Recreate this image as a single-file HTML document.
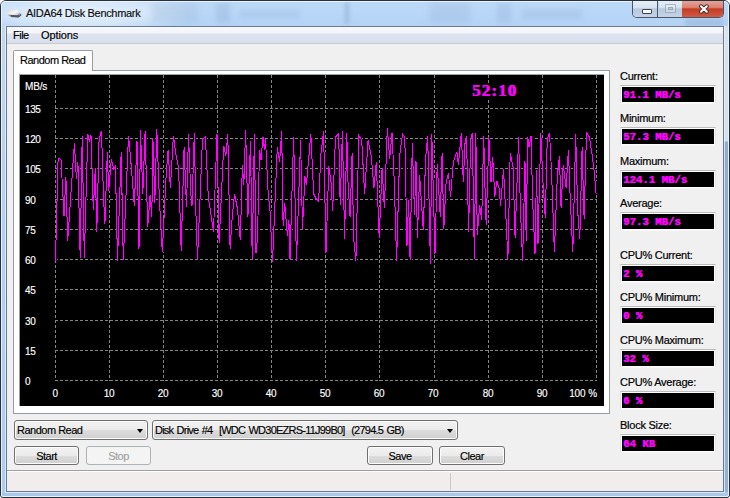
<!DOCTYPE html>
<html><head><meta charset="utf-8">
<style>
*{margin:0;padding:0;box-sizing:border-box}
html,body{width:730px;height:498px;overflow:hidden;background:#fff}
body{position:relative;font-family:"Liberation Sans",sans-serif;font-size:11px;color:#000;letter-spacing:-0.5px;-webkit-text-stroke:0.15px #000}
.a{position:absolute}
.lbl{color:#fff;font-size:11px;letter-spacing:-0.3px}
.rl{left:620px;font-size:11px;color:#000;letter-spacing:-0.25px;-webkit-text-stroke:0.2px #000}
.box{left:620px;width:96px;height:19px;background:#000;border-style:solid;border-width:1px;border-color:#bcbcbc #e6e6e6 #f7f7f7 #e2e2e2;box-shadow:inset 0 0 0 1px #fff;color:#ff00ff;font-family:"Liberation Mono",monospace;font-weight:bold;font-size:10.7px;letter-spacing:0;padding-left:2px;padding-top:1px;line-height:17px;text-shadow:0.45px 0 0 #f0f;-webkit-text-stroke:0.1px #f0f}
.btn{height:19px;border:1px solid #707070;border-radius:3px;background:linear-gradient(to bottom,#f2f2f2 0,#ebebeb 50%,#dddddd 51%,#cfcfcf 100%);text-align:center;line-height:16px;padding-top:1px;box-shadow:inset 0 0 0 1px #fcfcfc}
.btn.dis{border-color:#adb2b5;background:#f4f4f4;color:#a0a0a0;box-shadow:none;-webkit-text-stroke:0.15px #a0a0a0}
.combo{height:20px;border:1px solid #707070;border-radius:3px;background:linear-gradient(to bottom,#f2f2f2 0,#ebebeb 50%,#dddddd 51%,#cfcfcf 100%);line-height:19px;padding-left:2px;box-shadow:inset 0 0 0 1px #fcfcfc}
.arr{width:0;height:0;border-left:3.5px solid transparent;border-right:3.5px solid transparent;border-top:4px solid #000}
.clb{color:#fff;font-size:10px;letter-spacing:-0.4px;line-height:11px;-webkit-text-stroke:0.15px #fff}
</style></head><body>
<!-- window frame -->
<div class="a" style="left:0;top:0;width:730px;height:498px;border:1px solid #28303c;border-radius:6px 6px 3px 3px;background:#b6d4f2"></div>
<div class="a" style="left:1px;top:1px;width:728px;height:25px;border-radius:5px 5px 0 0;background:linear-gradient(to bottom,#bcd9f7 0,#b4d3f5 100%)"></div>
<div class="a" style="left:2px;top:26px;width:4px;height:466px;background:linear-gradient(to bottom,#c4d8ec 0,#bcd4ee 80px,#b0d0f4 200px,#acccf0 100%)"></div>
<div class="a" style="left:724px;top:26px;width:4px;height:466px;background:linear-gradient(to bottom,#d6e2ee 0,#d4e0ec 115px,#8eaed0 116px,#92b2d4 100%)"></div>
<div class="a" style="left:2px;top:492px;width:726px;height:4px;background:#a8c8ea"></div>
<div class="a" style="left:1px;top:1px;width:728px;height:496px;border:1px solid rgba(255,255,255,.7);border-radius:5px 5px 2px 2px"></div>
<div class="a" style="left:5px;top:25px;width:720px;height:468px;border:1px solid rgba(235,245,255,.75);border-top-color:transparent"></div>
<!-- title glow -->
<div class="a" style="left:1px;top:1px;width:200px;height:25px;background:radial-gradient(ellipse 120px 22px at 80px 12px,rgba(240,246,252,.85) 0,rgba(240,246,252,.5) 55%,rgba(240,246,252,0) 100%)"></div>
<div class="a" style="left:152px;top:4px;width:45px;height:18px;background:rgba(110,140,180,.16);filter:blur(3px)"></div>
<div class="a" style="left:216px;top:3px;width:14px;height:20px;background:rgba(110,140,180,.18);filter:blur(2px)"></div>
<div class="a" style="left:240px;top:10px;width:60px;height:8px;background:rgba(110,140,180,.12);filter:blur(2px)"></div>
<div class="a" style="left:344px;top:2px;width:6px;height:22px;background:rgba(100,130,170,.2);filter:blur(1.5px)"></div>
<div class="a" style="left:430px;top:3px;width:40px;height:20px;background:rgba(110,140,180,.14);filter:blur(3px)"></div>
<div class="a" style="left:497px;top:3px;width:14px;height:20px;background:rgba(110,140,180,.16);filter:blur(2px)"></div>
<div class="a" style="left:522px;top:9px;width:60px;height:10px;background:rgba(110,140,180,.14);filter:blur(2px)"></div>
<div class="a" style="left:685px;top:19px;width:38px;height:7px;background:rgba(90,120,160,.22);filter:blur(2px)"></div>
<!-- icon -->
<svg class="a" style="left:6px;top:8px" width="17" height="11" viewBox="0 0 17 11">
 <defs><linearGradient id="hd" x1="0" y1="0" x2="1" y2="1"><stop offset="0" stop-color="#d8d8d8"/><stop offset=".45" stop-color="#f6f6f6"/><stop offset="1" stop-color="#9a9aa0"/></linearGradient>
 <filter id="bl"><feGaussianBlur stdDeviation=".45"/></filter></defs>
 <g filter="url(#bl)">
 <path d="M1.2,4.2 L3.5,1.8 L11.5,2 L15.2,5.5 L15.2,7.5 L12.5,9.6 L5,9 L1.5,6.5 Z" fill="url(#hd)"/>
 <path d="M5,9 L12.5,9.6 L15.2,7.5 L15.2,5.8 L11,7.2 L4,6.8 Z" fill="#55555e"/>
 <path d="M1.5,6.5 L4,6.8 L5,9 Z" fill="#8a8a90"/>
 <circle cx="13.3" cy="6.5" r="1" fill="#9a90d8"/>
 </g>
</svg>
<!-- title -->
<div class="a" style="left:26px;top:7px;font-size:11px;letter-spacing:-0.32px;color:#101010">AIDA64 Disk Benchmark</div>
<!-- caption buttons -->
<div class="a" style="left:632px;top:1px;width:92px;height:17px;border:1px solid #4a5666;border-top:none;border-radius:0 0 5px 5px;overflow:hidden">
  <div class="a" style="left:0;top:0;width:25px;height:16px;background:linear-gradient(to bottom,#e6eef7 0,#d8e3ef 40%,#b8c9de 50%,#c4d3e6 100%);border-right:1px solid #4a5666"></div>
  <div class="a" style="left:26px;top:0;width:24px;height:16px;background:linear-gradient(to bottom,#e6eef7 0,#d8e3ef 40%,#b8c9de 50%,#c4d3e6 100%);border-right:1px solid #4a5666"></div>
  <div class="a" style="left:49px;top:0;width:43px;height:16px;background:linear-gradient(to bottom,#e3a497 0,#d98274 40%,#c63b25 50%,#cf5a43 100%)"></div>
  <div class="a" style="left:9px;top:8px;width:10px;height:5px;background:#fff;border:1px solid #3a4454;border-radius:1px"></div>
  <div class="a" style="left:32px;top:3px;width:11px;height:9px;border:1px solid rgba(120,135,155,.55);border-radius:1px;background:rgba(255,255,255,.25)"><div class="a" style="left:2px;top:2px;width:5px;height:3px;border:1px solid rgba(120,135,155,.55);background:rgba(170,185,205,.4)"></div></div>
  <svg class="a" style="left:65px;top:3px" width="12" height="10" viewBox="0 0 12 10"><path d="M3,2.3 L8.8,7.7 M8.8,2.3 L3,7.7" stroke="#40302e" stroke-width="4" stroke-linecap="round"/><path d="M3,2.3 L8.8,7.7 M8.8,2.3 L3,7.7" stroke="#fff" stroke-width="2" stroke-linecap="round"/></svg>
</div>
<!-- client -->
<div class="a" style="left:6px;top:26px;width:718px;height:466px;border:1px solid #6a7a8c;background:#f0f0f0"></div>
<!-- menu -->
<div class="a" style="left:7px;top:27px;width:716px;height:17px;background:linear-gradient(to bottom,#f8f9fc 0,#f2f4f9 6px,#dfe3f0 7px,#dbe0ee 15px);border-bottom:1px solid #c5c9d5"></div>
<div class="a" style="left:13px;top:29px">File</div>
<div class="a" style="left:41px;top:29px;letter-spacing:-0.1px">Options</div>
<!-- tab page -->
<div class="a" style="left:13px;top:70px;width:597px;height:344px;background:#fff;border:1px solid #979ba3"></div>
<div class="a" style="left:13px;top:50px;width:80px;height:21px;background:#fff;border:1px solid #979ba3;border-bottom:none;border-radius:2px 2px 0 0"></div>
<div class="a" style="left:20px;top:54px">Random Read</div>
<!-- chart -->
<div class="a" style="left:19px;top:74px;width:585px;height:332px;background:#000;border-top:1px solid #a0a0a0;border-left:1px solid #a0a0a0"></div>
<svg class="a" style="left:20px;top:75px" width="584" height="331" viewBox="20 75 584 331" shape-rendering="crispEdges">
<line x1="55" y1="380.5" x2="597" y2="380.5" stroke="#858585" stroke-width="1" stroke-dasharray="3 2"/>
<line x1="55" y1="350.5" x2="597" y2="350.5" stroke="#858585" stroke-width="1" stroke-dasharray="3 2"/>
<line x1="55" y1="320.5" x2="597" y2="320.5" stroke="#858585" stroke-width="1" stroke-dasharray="3 2"/>
<line x1="55" y1="289.5" x2="597" y2="289.5" stroke="#858585" stroke-width="1" stroke-dasharray="3 2"/>
<line x1="55" y1="259.5" x2="597" y2="259.5" stroke="#858585" stroke-width="1" stroke-dasharray="3 2"/>
<line x1="55" y1="229.5" x2="597" y2="229.5" stroke="#858585" stroke-width="1" stroke-dasharray="3 2"/>
<line x1="55" y1="199.5" x2="597" y2="199.5" stroke="#858585" stroke-width="1" stroke-dasharray="3 2"/>
<line x1="55" y1="168.5" x2="597" y2="168.5" stroke="#858585" stroke-width="1" stroke-dasharray="3 2"/>
<line x1="55" y1="138.5" x2="597" y2="138.5" stroke="#858585" stroke-width="1" stroke-dasharray="3 2"/>
<line x1="55" y1="108.5" x2="597" y2="108.5" stroke="#858585" stroke-width="1" stroke-dasharray="3 2"/>
<line x1="55.5" y1="75" x2="55.5" y2="381" stroke="#858585" stroke-width="1" stroke-dasharray="3 2"/>
<line x1="109.5" y1="75" x2="109.5" y2="381" stroke="#858585" stroke-width="1" stroke-dasharray="3 2"/>
<line x1="163.5" y1="75" x2="163.5" y2="381" stroke="#858585" stroke-width="1" stroke-dasharray="3 2"/>
<line x1="217.5" y1="75" x2="217.5" y2="381" stroke="#858585" stroke-width="1" stroke-dasharray="3 2"/>
<line x1="271.5" y1="75" x2="271.5" y2="381" stroke="#858585" stroke-width="1" stroke-dasharray="3 2"/>
<line x1="325.5" y1="75" x2="325.5" y2="381" stroke="#858585" stroke-width="1" stroke-dasharray="3 2"/>
<line x1="379.5" y1="75" x2="379.5" y2="381" stroke="#858585" stroke-width="1" stroke-dasharray="3 2"/>
<line x1="434.5" y1="75" x2="434.5" y2="381" stroke="#858585" stroke-width="1" stroke-dasharray="3 2"/>
<line x1="488.5" y1="75" x2="488.5" y2="381" stroke="#858585" stroke-width="1" stroke-dasharray="3 2"/>
<line x1="542.5" y1="75" x2="542.5" y2="381" stroke="#858585" stroke-width="1" stroke-dasharray="3 2"/>
<line x1="596.5" y1="75" x2="596.5" y2="381" stroke="#858585" stroke-width="1" stroke-dasharray="3 2"/>
</svg>
<svg class="a" style="left:20px;top:75px" width="584" height="331" viewBox="20 75 584 331">
<path d="M55.5,260.8 L58.1,158.4 L61.0,159.5 L64.0,216.0 L65.9,177.3 L67.7,241.0 L74.4,142.9 L76.4,179.3 L77.9,161.8 L80.2,257.6 L82.2,136.2 L84.3,257.9 L87.8,133.6 L89.2,141.5 L91.0,135.1 L93.3,209.9 L95.3,167.7 L96.8,231.7 L99.1,138.6 L101.5,130.7 L103.5,196.8 L104.9,224.4 L107.3,151.7 L108.7,191.0 L111.4,158.9 L113.7,169.1 L115.4,166.2 L117.5,260.8 L121.2,151.7 L123.3,260.2 L128.5,135.6 L131.4,167.7 L134.3,205.5 L137.0,141.5 L139.0,249.2 L140.5,130.4 L142.8,193.9 L145.1,131.3 L147.7,227.3 L150.1,195.3 L151.8,217.0 L152.9,138.0 L154.8,203.0 L156.8,129.2 L159.4,199.7 L162.3,252.1 L166.1,176.4 L168.1,150.2 L170.4,188.0 L173.4,135.6 L175.7,153.1 L178.6,167.7 L181.2,250.6 L184.1,147.3 L186.5,207.0 L188.5,134.2 L190.8,193.9 L192.0,205.5 L194.3,132.7 L196.1,220.1 L197.5,259.4 L202.5,138.6 L205.4,137.1 L208.3,196.8 L213.5,231.7 L217.0,134.2 L219.1,243.4 L221.4,195.3 L223.7,145.8 L225.8,156.0 L227.8,134.2 L230.1,249.2 L232.2,217.2 L234.5,193.9 L237.4,208.4 L240.3,240.4 L242.4,164.8 L243.8,185.1 L245.6,129.8 L247.9,217.2 L250.5,141.0 L252.2,259.0 L254.4,134.0 L256.0,253.0 L257.5,238.0 L259.5,150.0 L261.0,160.0 L263.0,137.0 L264.5,150.0 L265.5,139.0 L268.0,190.0 L270.0,211.0 L272.5,262.0 L277.3,147.3 L279.6,161.8 L281.7,131.3 L283.1,225.9 L284.6,202.6 L287.5,236.1 L288.9,220.1 L290.0,259.0 L293.6,137.0 L296.5,261.0 L300.6,140.0 L302.5,229.0 L304.9,176.4 L306.4,185.1 L310.8,134.2 L313.7,193.9 L315.7,198.0 L318.6,201.1 L321.0,153.1 L323.6,131.3 L326.0,253.0 L328.8,166.2 L331.1,182.2 L332.6,211.0 L335.5,137.1 L338.7,134.0 L340.2,205.0 L342.4,131.0 L344.6,239.0 L346.8,133.0 L348.0,182.0 L350.1,217.2 L352.1,153.1 L353.6,237.5 L355.9,260.8 L358.8,135.6 L361.7,140.0 L364.6,193.9 L368.1,140.0 L371.3,156.0 L373.9,188.0 L376.3,161.8 L379.2,237.5 L382.1,167.7 L384.4,208.4 L387.3,128.4 L389.7,158.9 L392.0,132.7 L394.3,182.2 L396.6,260.8 L399.6,156.0 L402.5,134.2 L404.8,137.1 L407.0,246.0 L408.6,200.0 L410.1,260.0 L412.3,143.0 L414.5,215.0 L416.0,161.0 L417.4,238.0 L419.6,175.0 L423.3,230.0 L425.5,160.0 L427.7,136.0 L430.4,264.0 L431.8,134.0 L435.0,254.0 L437.2,164.0 L440.3,217.0 L442.1,153.1 L443.8,228.8 L446.1,182.2 L448.5,173.5 L450.5,196.8 L453.4,161.8 L456.9,151.7 L458.4,164.8 L461.3,132.7 L463.3,182.2 L465.1,141.5 L466.5,135.6 L468.6,231.7 L470.6,141.5 L472.3,132.7 L474.4,259.4 L475.8,132.7 L477.3,234.6 L479.6,205.5 L481.7,220.1 L483.7,135.6 L485.4,202.6 L486.2,225.0 L488.9,137.1 L491.0,182.2 L492.7,157.5 L494.8,196.8 L496.8,180.8 L499.1,188.0 L500.6,205.5 L503.5,169.1 L505.5,208.4 L507.9,259.4 L510.2,153.1 L513.1,167.7 L515.1,237.5 L518.6,137.1 L520.4,208.4 L522.6,261.0 L525.0,161.0 L526.2,241.0 L527.7,137.1 L529.1,147.3 L531.1,135.6 L532.6,199.7 L535.0,254.0 L536.5,170.0 L538.0,244.0 L540.8,132.7 L542.8,180.0 L545.3,218.0 L547.2,140.0 L549.5,132.7 L551.5,170.6 L554.4,252.1 L557.3,176.4 L559.4,156.0 L561.1,208.4 L563.2,164.8 L566.1,188.0 L568.4,150.2 L570.4,202.6 L572.8,252.1 L575.7,134.2 L577.7,211.3 L579.8,239.0 L582.1,147.3 L584.1,218.6 L586.5,132.7 L589.4,137.1 L592.3,156.0 L594.3,172.0 L596.1,193.9" fill="none" stroke="#220022" stroke-width="1" shape-rendering="crispEdges" transform="translate(1,0)"/>
<path d="M55.5,260.8 L58.1,158.4 L61.0,159.5 L64.0,216.0 L65.9,177.3 L67.7,241.0 L74.4,142.9 L76.4,179.3 L77.9,161.8 L80.2,257.6 L82.2,136.2 L84.3,257.9 L87.8,133.6 L89.2,141.5 L91.0,135.1 L93.3,209.9 L95.3,167.7 L96.8,231.7 L99.1,138.6 L101.5,130.7 L103.5,196.8 L104.9,224.4 L107.3,151.7 L108.7,191.0 L111.4,158.9 L113.7,169.1 L115.4,166.2 L117.5,260.8 L121.2,151.7 L123.3,260.2 L128.5,135.6 L131.4,167.7 L134.3,205.5 L137.0,141.5 L139.0,249.2 L140.5,130.4 L142.8,193.9 L145.1,131.3 L147.7,227.3 L150.1,195.3 L151.8,217.0 L152.9,138.0 L154.8,203.0 L156.8,129.2 L159.4,199.7 L162.3,252.1 L166.1,176.4 L168.1,150.2 L170.4,188.0 L173.4,135.6 L175.7,153.1 L178.6,167.7 L181.2,250.6 L184.1,147.3 L186.5,207.0 L188.5,134.2 L190.8,193.9 L192.0,205.5 L194.3,132.7 L196.1,220.1 L197.5,259.4 L202.5,138.6 L205.4,137.1 L208.3,196.8 L213.5,231.7 L217.0,134.2 L219.1,243.4 L221.4,195.3 L223.7,145.8 L225.8,156.0 L227.8,134.2 L230.1,249.2 L232.2,217.2 L234.5,193.9 L237.4,208.4 L240.3,240.4 L242.4,164.8 L243.8,185.1 L245.6,129.8 L247.9,217.2 L250.5,141.0 L252.2,259.0 L254.4,134.0 L256.0,253.0 L257.5,238.0 L259.5,150.0 L261.0,160.0 L263.0,137.0 L264.5,150.0 L265.5,139.0 L268.0,190.0 L270.0,211.0 L272.5,262.0 L277.3,147.3 L279.6,161.8 L281.7,131.3 L283.1,225.9 L284.6,202.6 L287.5,236.1 L288.9,220.1 L290.0,259.0 L293.6,137.0 L296.5,261.0 L300.6,140.0 L302.5,229.0 L304.9,176.4 L306.4,185.1 L310.8,134.2 L313.7,193.9 L315.7,198.0 L318.6,201.1 L321.0,153.1 L323.6,131.3 L326.0,253.0 L328.8,166.2 L331.1,182.2 L332.6,211.0 L335.5,137.1 L338.7,134.0 L340.2,205.0 L342.4,131.0 L344.6,239.0 L346.8,133.0 L348.0,182.0 L350.1,217.2 L352.1,153.1 L353.6,237.5 L355.9,260.8 L358.8,135.6 L361.7,140.0 L364.6,193.9 L368.1,140.0 L371.3,156.0 L373.9,188.0 L376.3,161.8 L379.2,237.5 L382.1,167.7 L384.4,208.4 L387.3,128.4 L389.7,158.9 L392.0,132.7 L394.3,182.2 L396.6,260.8 L399.6,156.0 L402.5,134.2 L404.8,137.1 L407.0,246.0 L408.6,200.0 L410.1,260.0 L412.3,143.0 L414.5,215.0 L416.0,161.0 L417.4,238.0 L419.6,175.0 L423.3,230.0 L425.5,160.0 L427.7,136.0 L430.4,264.0 L431.8,134.0 L435.0,254.0 L437.2,164.0 L440.3,217.0 L442.1,153.1 L443.8,228.8 L446.1,182.2 L448.5,173.5 L450.5,196.8 L453.4,161.8 L456.9,151.7 L458.4,164.8 L461.3,132.7 L463.3,182.2 L465.1,141.5 L466.5,135.6 L468.6,231.7 L470.6,141.5 L472.3,132.7 L474.4,259.4 L475.8,132.7 L477.3,234.6 L479.6,205.5 L481.7,220.1 L483.7,135.6 L485.4,202.6 L486.2,225.0 L488.9,137.1 L491.0,182.2 L492.7,157.5 L494.8,196.8 L496.8,180.8 L499.1,188.0 L500.6,205.5 L503.5,169.1 L505.5,208.4 L507.9,259.4 L510.2,153.1 L513.1,167.7 L515.1,237.5 L518.6,137.1 L520.4,208.4 L522.6,261.0 L525.0,161.0 L526.2,241.0 L527.7,137.1 L529.1,147.3 L531.1,135.6 L532.6,199.7 L535.0,254.0 L536.5,170.0 L538.0,244.0 L540.8,132.7 L542.8,180.0 L545.3,218.0 L547.2,140.0 L549.5,132.7 L551.5,170.6 L554.4,252.1 L557.3,176.4 L559.4,156.0 L561.1,208.4 L563.2,164.8 L566.1,188.0 L568.4,150.2 L570.4,202.6 L572.8,252.1 L575.7,134.2 L577.7,211.3 L579.8,239.0 L582.1,147.3 L584.1,218.6 L586.5,132.7 L589.4,137.1 L592.3,156.0 L594.3,172.0 L596.1,193.9" fill="none" stroke="#ff00ff" stroke-width="1" shape-rendering="crispEdges"/>
</svg>
<div class="a clb" style="left:25px;top:81px;letter-spacing:-0.15px">MB/s</div>
<div class="a clb" style="left:25px;top:376px">0</div>
<div class="a clb" style="left:25px;top:346px">15</div>
<div class="a clb" style="left:25px;top:316px">30</div>
<div class="a clb" style="left:25px;top:285px">45</div>
<div class="a clb" style="left:25px;top:255px">60</div>
<div class="a clb" style="left:25px;top:225px">75</div>
<div class="a clb" style="left:25px;top:195px">90</div>
<div class="a clb" style="left:25px;top:164px">105</div>
<div class="a clb" style="left:25px;top:134px">120</div>
<div class="a clb" style="left:25px;top:104px">135</div>
<div class="a clb" style="left:35px;top:388px;width:40px;text-align:center">0</div>
<div class="a clb" style="left:89px;top:388px;width:40px;text-align:center">10</div>
<div class="a clb" style="left:143px;top:388px;width:40px;text-align:center">20</div>
<div class="a clb" style="left:197px;top:388px;width:40px;text-align:center">30</div>
<div class="a clb" style="left:251px;top:388px;width:40px;text-align:center">40</div>
<div class="a clb" style="left:305px;top:388px;width:40px;text-align:center">50</div>
<div class="a clb" style="left:359px;top:388px;width:40px;text-align:center">60</div>
<div class="a clb" style="left:413px;top:388px;width:40px;text-align:center">70</div>
<div class="a clb" style="left:468px;top:388px;width:40px;text-align:center">80</div>
<div class="a clb" style="left:522px;top:388px;width:40px;text-align:center">90</div>
<div class="a clb" style="left:546px;top:388px;width:51px;text-align:right;letter-spacing:-0.1px">100 %</div>
<div class="a" style="left:471px;top:83px;height:15px;padding-left:1px;line-height:15px;background:#000;font-family:'Liberation Serif',serif;font-weight:bold;font-size:17px;color:#ff00ff;letter-spacing:1.1px;text-shadow:0.6px 0 0 #f0f;-webkit-text-stroke:0.1px #f0f">52:10</div>
<!-- right panel -->
<div class="a rl" style="top:70px">Current:</div>
<div class="a box" style="top:85px">91.1 MB/s</div>
<div class="a rl" style="top:112px">Minimum:</div>
<div class="a box" style="top:127px">57.3 MB/s</div>
<div class="a rl" style="top:155px">Maximum:</div>
<div class="a box" style="top:170px">124.1 MB/s</div>
<div class="a rl" style="top:197px">Average:</div>
<div class="a box" style="top:212px">97.3 MB/s</div>
<div class="a rl" style="top:249px">CPU% Current:</div>
<div class="a box" style="top:264px">2 %</div>
<div class="a rl" style="top:291px">CPU% Minimum:</div>
<div class="a box" style="top:306px">0 %</div>
<div class="a rl" style="top:334px">CPU% Maximum:</div>
<div class="a box" style="top:349px">32 %</div>
<div class="a rl" style="top:376px">CPU% Average:</div>
<div class="a box" style="top:391px">6 %</div>
<div class="a rl" style="top:419px">Block Size:</div>
<div class="a box" style="top:434px">64 KB</div>
<!-- bottom controls -->
<div class="a combo" style="left:14px;top:420px;width:134px">Random Read<div class="a arr" style="right:4px;top:8px"></div></div>
<div class="a combo" style="left:152px;top:420px;width:306px;letter-spacing:-0.77px;word-spacing:1px">Disk Drive #4&nbsp; [WDC WD30EZRS-11J99B0]&nbsp; (2794.5 GB)<div class="a arr" style="right:4px;top:8px"></div></div>
<div class="a btn" style="left:14px;top:446px;width:65px">Start</div>
<div class="a btn dis" style="left:86px;top:446px;width:65px">Stop</div>
<div class="a btn" style="left:367px;top:446px;width:66px">Save</div>
<div class="a btn" style="left:439px;top:446px;width:66px">Clear</div>
<!-- status bar -->
<div class="a" style="left:7px;top:470px;width:716px;height:21px;background:#f1eded;border-top:1px solid #a0a0a0;box-shadow:inset 0 1px 0 #fff"></div>
<div class="a" style="left:450px;top:473px;width:1px;height:17px;background:#c8c8c8"></div>
</body></html>
